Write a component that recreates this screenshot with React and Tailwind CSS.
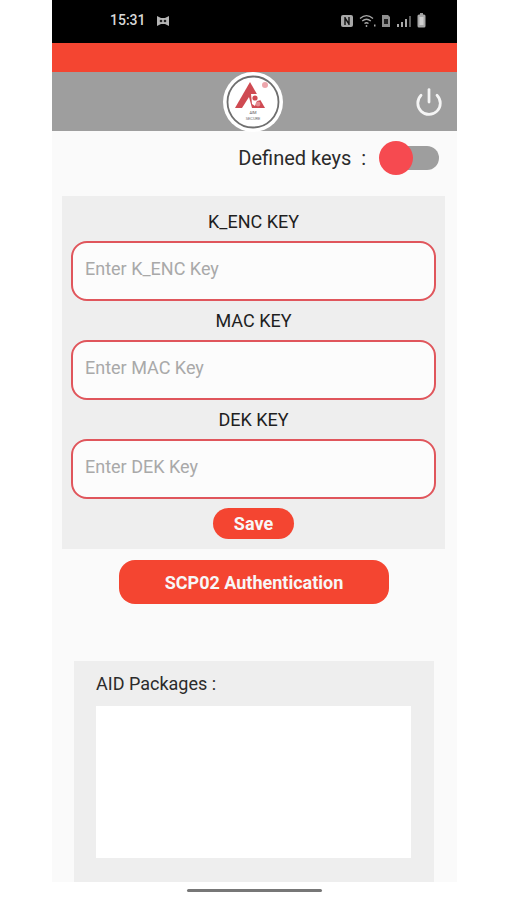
import React from 'react'
import { Power } from 'lucide-react'

const font = { fontFamily: 'Roboto, sans-serif' }

const StatusIcons = () => (
    <div className="flex items-center gap-[5px] text-[#b5b5b5]">
        <svg width="14" height="14" viewBox="0 0 14 14">
            <rect x="1" y="1" width="12" height="12" rx="2" fill="#a8a8a8" />
            <path d="M5 3v8M9 3v8M5 4l4 6" stroke="#111" strokeWidth="1.4" fill="none" />
        </svg>
        <svg width="17" height="14" viewBox="0 0 17 14" fill="none" stroke="#a8a8a8" strokeWidth="1.3">
            <path d="M1 4.5C5 1 10 1 14 4.5" />
            <path d="M3.2 7C6 4.7 9 4.7 11.8 7" />
            <path d="M5.5 9.5C6.8 8.5 8.2 8.5 9.5 9.5" />
            <circle cx="7.5" cy="12" r="0.9" fill="#a8a8a8" stroke="none" />
            <rect x="15" y="10.5" width="1.5" height="2" fill="#a8a8a8" stroke="none" />
        </svg>
        <svg width="10" height="14" viewBox="0 0 10 14">
            <path d="M1 1h6l2 2v10H1z" fill="#8f8f8f" />
            <rect x="3" y="5" width="4" height="5" fill="#222" />
        </svg>
        <svg width="16" height="14" viewBox="0 0 16 14" fill="#a8a8a8">
            <rect x="1" y="10" width="2" height="3" />
            <rect x="5" y="8" width="2" height="5" />
            <rect x="9" y="5" width="2" height="8" />
            <rect x="13" y="2" width="2" height="11" fill="#5a5a5a" />
        </svg>
        <svg width="9" height="15" viewBox="0 0 9 15">
            <rect x="3" y="0" width="3" height="2" fill="#9a9a9a" />
            <rect x="0.5" y="1.5" width="8" height="13" rx="1.5" fill="#a8a8a8" />
            <rect x="2.5" y="4" width="4" height="8" fill="#d0d0d0" />
        </svg>
    </div>
)

const Logo = () => (
    <svg width="60" height="60" viewBox="0 0 60 60">
        <circle cx="30" cy="30" r="30" fill="#fff" />
        <circle cx="30" cy="30" r="25.5" fill="#fff" stroke="#6f6f6f" strokeWidth="1.8" />
        <path d="M27 10L12 36H42Z" fill="#cf4a52" />
        <path d="M19 36L26 25L29 36Z" fill="#fff" />
        <path d="M28 22h7l3 6-4 1-2 5-3-2z" fill="#fff" />
        <circle cx="32" cy="26" r="2.6" fill="#cf4a52" />
        <circle cx="35" cy="32" r="2.4" fill="#e58a90" />
        <circle cx="42" cy="13" r="3" fill="#eda6ac" />
        <text x="30" y="42" textAnchor="middle" fontSize="4" fill="#555">AIM</text>
        <text x="30" y="48" textAnchor="middle" fontSize="4" fill="#666">SECURE</text>
    </svg>
)

const KeyField = ({ label, placeholder }) => (
    <div className="flex flex-col">
        <label className="h-[45px] pt-[14px] text-center text-[18px] leading-[24px] text-[#1f1f1f]">{label}</label>
        <input
            type="text"
            placeholder={placeholder}
            className="h-[60px] rounded-[16px] border-2 border-[#e0565c] bg-[#fcfcfc] px-[12px] pb-[6px] text-[18px] outline-none placeholder:text-[#a9a9a9]"
        />
    </div>
)

const App = () => {
    return (
        <div className="min-h-[900px] w-full bg-white" style={font}>
            <div className="ml-[52px] flex h-[900px] w-[405px] flex-col">

                <div className="flex h-[43px] items-center justify-between bg-black pb-[2px] pl-[58px] pr-[31px]">
                    <div className="flex items-center gap-[11px]">
                        <span className="text-[14px] font-medium text-[#d8d8d8]">15:31</span>
                        <svg width="12" height="10" viewBox="0 0 12 10" fill="#b5b5b5">
                            <path d="M0 0l4 2h4l4-2v10l-4-2H4l-4 2z" />
                            <circle cx="4" cy="5" r="1.3" fill="#222" />
                            <circle cx="8" cy="5" r="1.3" fill="#222" />
                        </svg>
                    </div>
                    <StatusIcons />
                </div>

                <div className="h-[29px] bg-[#f44531]"></div>

                <div className="relative flex h-[59px] items-center justify-center bg-[#9e9e9e] pr-[4px]">
                    <Logo />
                    <Power className="absolute right-[13px] top-[15px] text-[#f5f5f5]" size={30} strokeWidth={2.2} />
                </div>

                <div className="flex flex-1 flex-col bg-[#fafafa]">
                    <div className="flex h-[65px] items-center justify-end pr-[18px] pb-[11px]">
                        <span className="mr-[17px] text-[20px] text-[#2b2b2b]">Defined keys&nbsp; :</span>
                        <div className="relative h-[24px] w-[56px] rounded-full bg-[#9e9e9e]">
                            <div className="absolute left-[-4px] top-[-5px] h-[34px] w-[34px] rounded-full bg-[#f64a50]"></div>
                        </div>
                    </div>

                    <div className="mx-[10px] flex h-[353px] w-[383px] flex-col bg-[#eeeeee] px-[9px]">
                        <KeyField label="K_ENC KEY" placeholder="Enter K_ENC Key" />
                        <div className="-mt-[6px]"><KeyField label="MAC KEY" placeholder="Enter MAC Key" /></div>
                        <div className="-mt-[6px]"><KeyField label="DEK KEY" placeholder="Enter DEK Key" /></div>
                        <button className="mx-auto mt-[9px] h-[31px] w-[81px] rounded-full bg-[#f44531] text-[18px] font-bold text-[#f7f7f7]">
                            Save
                        </button>
                    </div>

                    <button className="ml-[67px] mt-[11px] h-[44px] w-[270px] rounded-[16px] bg-[#f44531] text-[18px] font-bold text-[#f7f7f7]">
                        SCP02 Authentication
                    </button>

                    <div className="ml-[22px] mt-[57px] flex w-[360px] flex-1 flex-col bg-[#eeeeee] px-[22px]">
                        <span className="h-[45px] pt-[11px] text-[18px] leading-[24px] text-[#2b2b2b]">AID Packages :</span>
                        <div className="h-[152px] w-[315px] bg-white"></div>
                    </div>
                </div>

                <div className="flex h-[18px] items-start justify-center bg-white pt-[7px]">
                    <div className="h-[3px] w-[135px] rounded-full bg-[#777777]"></div>
                </div>
            </div>
        </div>
    )
}

export default App
